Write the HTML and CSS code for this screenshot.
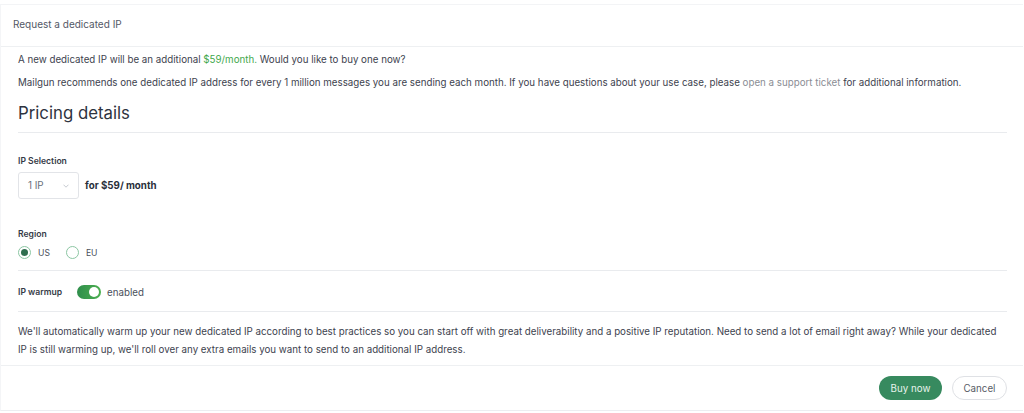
FILE: index.html
```html
<!DOCTYPE html>
<html>
<head>
<meta charset="utf-8">
<link rel="stylesheet" href="styles.css">
</head>
<body>
<div class="card">
  <div class="card-header">Request a dedicated IP</div>
  <div class="card-body">
    <p class="intro">A new dedicated IP will be an additional <span class="price">$59/month.</span> Would you like to buy one now?</p>
    <p class="intro second">Mailgun recommends one dedicated IP address for every 1 million messages you are sending each month. If you have questions about your use case, please <a class="link" href="#">open a support ticket</a> for additional information.</p>
    <h2 class="section-title">Pricing details</h2>
    <div class="field">
      <div class="label">IP Selection</div>
      <div class="select-row">
        <div class="select"><span>1 IP</span>
          <svg class="chev" width="6" height="4" viewBox="0 0 6 4"><path d="M0.5 0.7 L3 3.2 L5.5 0.7" fill="none" stroke="#b8bcc4" stroke-width="0.8"/></svg>
        </div>
        <span class="total">for $59/ month</span>
      </div>
    </div>
    <div class="field region">
      <div class="label">Region</div>
      <div class="radios">
        <label class="radio"><span class="dot checked"></span>US</label>
        <label class="radio"><span class="dot"></span>EU</label>
      </div>
    </div>
    <div class="warmup">
      <span class="label inline">IP warmup</span>
      <span class="toggle"><span class="knob"></span></span>
      <span class="toggle-text">enabled</span>
    </div>
    <p class="note">We'll automatically warm up your new dedicated IP according to best practices so you can start off with great deliverability and a positive IP reputation. Need to send a lot of email right away? While your dedicated IP is still warming up, we'll roll over any extra emails you want to send to an additional IP address.</p>
  </div>
  <div class="card-footer">
    <button class="btn primary">Buy now</button>
    <button class="btn secondary">Cancel</button>
  </div>
</div>
</body>
</html>
```
FILE: styles.css
```css
html, body {
  margin: 0;
  padding: 0;
  background: #ffffff;
}
body {
  font-family: Inter, "Noto Sans", sans-serif;
  color: #3b404c;
  padding: 4px 0 0 0;
}
.card {
  border-top: 1px solid #f3f4f6;
  border-bottom: 1px solid #eceef1;
  border-left: 1px solid #f4f5f7;
  width: 1022px;
  background: #fff;
}
.card-header {
  height: 42px;
  line-height: 38px;
  box-sizing: border-box;
  padding-left: 12px;
  font-size: 10px;
  color: #535866;
  border-bottom: 1px solid #eef0f2;
}
.card-body {
  padding: 0 16px 0 17px;
}
.intro {
  margin: 0;
  font-size: 9.75px;
  line-height: 14px;
  padding-top: 6px;
  color: #3d424e;
}
.intro.second {
  padding-top: 9px;
}
.price {
  color: #43a84c;
}
.link {
  color: #8a8d94;
  text-decoration: none;
}
.section-title {
  margin: 0;
  font-weight: 400;
  font-size: 16.8px;
  line-height: 24px;
  color: #2e3340;
  padding: 11px 0 7px 0;
  border-bottom: 1px solid #e9ebee;
}
.field {
  padding-top: 23px;
}
.label {
  font-size: 8.6px;
  font-weight: 600;
  color: #353a46;
  line-height: 11px;
}
.select-row {
  display: flex;
  align-items: center;
  margin-top: 5px;
}
.select {
  width: 61px;
  height: 27px;
  border: 1px solid #e2e4e8;
  border-radius: 3px;
  box-sizing: border-box;
  display: flex;
  align-items: center;
  justify-content: space-between;
  padding: 0 9px 0 9px;
  font-size: 9.8px;
  color: #6a6f7a;
}
.chev {
  display: block;
}
.total {
  margin-left: 6px;
  font-size: 9.75px;
  font-weight: 700;
  color: #2a2f3b;
}
.field.region {
  padding-top: 30px;
}
.radios {
  display: flex;
  gap: 16px;
  margin-top: 6px;
  padding-bottom: 11px;
  border-bottom: 1px solid #e9ebee;
}
.radio {
  display: flex;
  align-items: center;
  gap: 7px;
  font-size: 8.6px;
  color: #4a4f5b;
}
.dot {
  width: 13px;
  height: 13px;
  border: 1px solid #8cc6a3;
  border-radius: 50%;
  box-sizing: border-box;
  display: inline-flex;
  align-items: center;
  justify-content: center;
}
.dot.checked::after {
  content: "";
  width: 7px;
  height: 7px;
  border-radius: 50%;
  background: #2f6e4f;
}
.warmup {
  display: flex;
  align-items: center;
  height: 41px;
  box-sizing: border-box;
  padding-top: 2px;
  border-bottom: 1px solid #e9ebee;
}
.label.inline {
  width: 59px;
}
.toggle {
  width: 24px;
  height: 14px;
  border-radius: 7px;
  background: linear-gradient(90deg, #2f8e4c, #4caf50);
  position: relative;
  display: inline-block;
}
.knob {
  position: absolute;
  right: 2px;
  top: 2px;
  width: 10px;
  height: 10px;
  border-radius: 50%;
  background: #fff;
}
.toggle-text {
  margin-left: 6px;
  font-size: 9.75px;
  color: #4a4f5b;
}
.note {
  margin: 0;
  padding: 11px 0 6px 0;
  font-size: 9.75px;
  line-height: 18px;
  color: #3d424e;
}
.card-footer {
  border-top: 1px solid #eef0f2;
  height: 44px;
  display: flex;
  align-items: center;
  justify-content: flex-end;
  padding-right: 16px;
  gap: 10px;
}
.btn {
  font-family: Inter, "Noto Sans", sans-serif;
  font-size: 9.75px;
  height: 24px;
  border-radius: 12px;
  cursor: pointer;
}
.btn.primary {
  background: #378a5f;
  color: #e8f3ec;
  border: none;
  width: 63px;
}
.btn.secondary {
  background: #fff;
  color: #575c66;
  border: 1px solid #dfe1e5;
  width: 55px;
}
```
